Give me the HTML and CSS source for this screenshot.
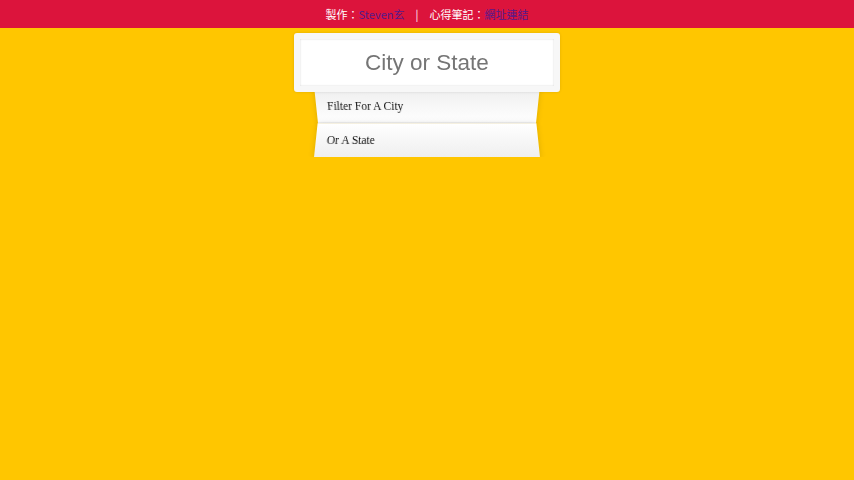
FILE: index.html
```html
<!DOCTYPE html>
<html lang="zh-Hant">
<head>
  <meta charset="UTF-8">
  <meta name="viewport" content="width=device-width, initial-scale=1.0">
  <title>Type Ahead</title>
  <link rel="stylesheet" href="styles.css">
</head>
<body>
  <div class="topbar">
    製作：<a href="#">Steven玄</a><span class="sep">|</span>心得筆記：<a href="#">網址連結</a>
  </div>

  <form class="search-form">
    <input type="text" class="search" placeholder="City or State">
    <ul class="suggestions">
      <li>Filter for a city</li>
      <li>or a state</li>
    </ul>
  </form>
</body>
</html>
```

FILE: styles.css
```css
html {
  box-sizing: border-box;
  background: #ffc600;
}
*, *:before, *:after {
  box-sizing: inherit;
}
body {
  margin: 0;
  font-family: "Liberation Serif", "Times New Roman", serif;
  font-size: 11.5px;
}
.topbar {
  height: 28px;
  line-height: 28px;
  background-color: #dc143c;
  color: white;
  text-align: center;
  font-family: "Noto Sans CJK TC", "Noto Sans", sans-serif;
  font-size: 11px;
}
.topbar a {
  color: #551a8b;
  text-decoration: none;
}
.sep {
  margin: 0 11px;
}
.search-form {
  width: 222px;
  margin: 5px auto 0;
}
input.search {
  display: block;
  position: relative;
  z-index: 2;
  width: 266px;
  height: 59px;
  margin: 0 0 -5px -22px;
  padding: 0 0 0 0;
  text-align: center;
  outline: 0;
  border: 6px solid #f7f7f7;
  border-radius: 3px;
  background: white;
  font-family: "Liberation Sans", Arial, sans-serif;
  font-size: 22.5px;
  box-shadow: 0 0 3px rgba(0, 0, 0, 0.12), inset 0 0 2px rgba(0, 0, 0, 0.19);
}
input.search::placeholder {
  color: #757575;
}
.suggestions {
  margin: 0;
  padding: 0;
}
.suggestions li {
  list-style: none;
  border-bottom: 1px solid #d8d8d8;
  box-shadow: 0 0 6px rgba(0, 0, 0, 0.14);
  margin: 0;
  padding: 11px 11px;
  color: #111;
  text-transform: capitalize;
}
.suggestions li:nth-child(odd) {
  transform: perspective(55px) rotateX(-3deg) translateY(2px);
  background: linear-gradient(to top, #ffffff 0%, #efefef 100%);
}
.suggestions li:nth-child(even) {
  transform: perspective(55px) rotateX(3deg) translateY(1px) scale(1.001);
  background: linear-gradient(to bottom, #ffffff 0%, #efefef 100%);
}
```
